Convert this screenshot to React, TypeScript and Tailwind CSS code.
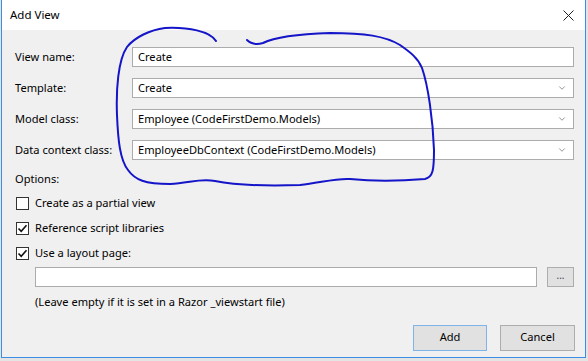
import { ChevronDown } from 'lucide-react'

const FIELDS: { label: string; value: string; dropdown: boolean }[] = [
  { label: 'View name:', value: 'Create', dropdown: false },
  { label: 'Template:', value: 'Create', dropdown: true },
  { label: 'Model class:', value: 'Employee (CodeFirstDemo.Models)', dropdown: true },
  { label: 'Data context class:', value: 'EmployeeDbContext (CodeFirstDemo.Models)', dropdown: true },
]

const OPTIONS = [
  { label: 'Create as a partial view', checked: false },
  { label: 'Reference script libraries', checked: true },
  { label: 'Use a layout page:', checked: true },
]

function CheckBox({ checked }: { checked: boolean }) {
  return (
    <span className="flex h-[13px] w-[13px] flex-none items-center justify-center border border-[#333] bg-white">
      {checked && (
        <svg width="11" height="11" viewBox="0 0 11 11">
          <path d="M1.5 5.5 L4.2 8.3 L9.5 2.2" fill="none" stroke="#111" strokeWidth="1.6" />
        </svg>
      )}
    </span>
  )
}

export default function App() {
  return (
    <div
      className="relative flex h-[361px] w-[588px] bg-[#e4e4e4] text-[11.1px] text-black"
      style={{ fontFamily: '"Noto Sans", "Open Sans", sans-serif' }}
    >
      <div className="ml-px flex h-[358px] w-[585px] flex-col border-x border-b border-[#3a8ee6] bg-[#f0f0f0]">
        {/* title bar */}
        <div className="flex h-[30px] items-center justify-between bg-white pl-[8px] pr-[11px]">
          <span className="text-[11.5px]">Add View</span>
          <svg width="11" height="11" viewBox="0 0 11 11">
            <path d="M0.5 0.5 L10.5 10.5 M10.5 0.5 L0.5 10.5" stroke="#222" strokeWidth="1" />
          </svg>
        </div>

        <div className="flex flex-col pl-[13px] pt-[17px]">
          <div className="grid grid-cols-[117px_442px] gap-y-[11px]">
            {FIELDS.map((f) => (
              <div key={f.label} className="contents">
                <span className="flex h-[20px] items-center">{f.label}</span>
                <div className="flex h-[20px] items-center border border-[#acacac] bg-white pl-[5px] pr-[6px]">
                  <span className="flex-1">{f.value}</span>
                  {f.dropdown && <ChevronDown size={10} strokeWidth={1.5} className="text-[#555]" />}
                </div>
              </div>
            ))}
          </div>

          <div className="mt-[11px] flex h-[16px] items-center">Options:</div>

          <div className="mt-[8px] flex flex-col gap-[9px] pl-[1px]">
            {OPTIONS.map((o) => (
              <label key={o.label} className="flex h-[16px] items-center gap-[6px]">
                <CheckBox checked={o.checked} />
                {o.label}
              </label>
            ))}
          </div>

          <div className="mt-[6px] flex items-center gap-[10px] pl-[20px]">
            <div className="h-[20px] w-[502px] border border-[#acacac] bg-white" />
            <button className="flex h-[20px] w-[27px] items-start justify-center border border-[#adadad] bg-[#e1e1e1] text-[10px] leading-[14px] text-[#444]">
              ...
            </button>
          </div>

          <div className="mt-[7px] pl-[20px]">(Leave empty if it is set in a Razor _viewstart file)</div>

          <div className="mt-[14px] flex justify-end gap-[13px] pr-[10px]">
            <button className="h-[26px] w-[74px] border border-[#7eb4ea] bg-[#e1e1e1]">Add</button>
            <button className="h-[26px] w-[75px] border border-[#adadad] bg-[#e1e1e1]">Cancel</button>
          </div>
        </div>
      </div>

      {/* hand-drawn ink loop over the form */}
      <svg className="pointer-events-none absolute left-0 top-0" width="588" height="361" viewBox="0 0 588 361">
        <path
          d="M216 41 C210 31 188 27 165 28 C150 30 135 37 127 47 C118 60 116 90 117 115 C118 140 120 160 128 170 C135 180 145 184 170 184 C190 183 200 178 215 181 C240 186 270 186 300 185 C320 183 335 178 350 179 C370 181 400 181 425 179 C433 177 434 170 434 150 C433 120 428 85 422 68 C418 58 410 52 400 45 C385 36 365 33 330 33 C300 34 275 37 263 43 C256 45 250 43 247 40"
          fill="none"
          stroke="#1414c8"
          strokeWidth="2"
          strokeLinecap="round"
        />
      </svg>
    </div>
  )
}
